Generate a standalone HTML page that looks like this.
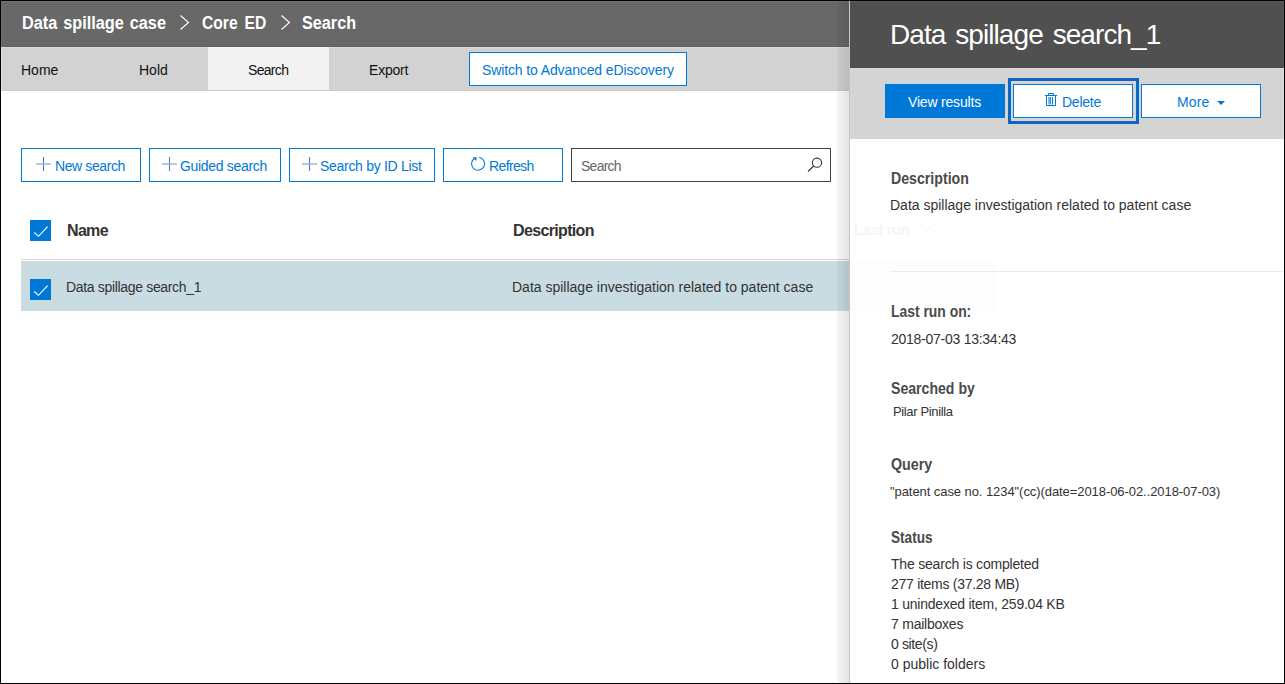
<!DOCTYPE html>
<html><head><meta charset="utf-8">
<style>
*{margin:0;padding:0;box-sizing:border-box}
html,body{width:1285px;height:684px;overflow:hidden;background:#000}
body{position:relative;font-family:"Liberation Sans",sans-serif}
.a{position:absolute;white-space:nowrap;line-height:1}
.r{position:absolute}
svg{position:absolute;overflow:visible}
.btn{position:absolute;border:1px solid #0078d7;background:#fff}
.blue{color:#0078d7}
.chk{position:absolute;width:21px;height:21px;background:#0078d7}
.lbl{font-weight:bold;color:#4a4a4a;font-size:16px;transform-origin:0 0}
.val{color:#333;font-size:14px}
</style></head><body>
<!-- main white area -->
<div class="r" style="left:1px;top:1px;width:1283px;height:682px;background:#fff"></div>
<!-- header -->
<div class="r" style="left:1px;top:1px;width:848px;height:46px;background:#686868"></div>
<div class="r" style="left:1px;top:47px;width:848px;height:44px;background:#d2d2d2"></div>
<div class="r" style="left:208px;top:47px;width:121px;height:44px;background:#f2f2f2"></div>

<div class="r" style="left:1px;top:46px;width:848px;height:1px;background:#616161"></div>
<div class="r" style="left:1px;top:47px;width:848px;height:1px;background:#dcdcdc"></div>
<div class="r" style="left:1px;top:90px;width:848px;height:1px;background:#cbcbcb"></div>
<div class="r" style="left:208px;top:47px;width:121px;height:1px;background:#f6f6f6"></div>
<div class="r" style="left:1px;top:1px;width:848px;height:1px;background:#717171"></div>
<div class="r" style="left:1px;top:1px;width:1px;height:46px;background:#717171"></div>
<div class="r" style="left:1px;top:47px;width:1px;height:44px;background:#dcdcdc"></div>

<div class="a" style="left:22px;top:14px;font-size:18px;font-weight:bold;color:#fff;word-spacing:1.5px;transform:scaleX(0.905);transform-origin:0 0">Data spillage case</div>
<svg style="left:180px;top:15px" width="10" height="16"><polyline points="0.5,0.5 8.5,7.5 0.5,14.5" fill="none" stroke="#fff" stroke-width="1.1"/></svg>
<div class="a" style="left:202px;top:14px;font-size:18px;font-weight:bold;color:#fff;word-spacing:3px;transform:scaleX(0.869);transform-origin:0 0">Core ED</div>
<svg style="left:281px;top:15px" width="10" height="16"><polyline points="0.5,0.5 8.5,7.5 0.5,14.5" fill="none" stroke="#fff" stroke-width="1.1"/></svg>
<div class="a" style="left:302px;top:14px;font-size:18px;font-weight:bold;color:#fff;transform:scaleX(0.9);transform-origin:0 0">Search</div>

<div class="a" style="left:21px;top:63px;font-size:14px;color:#111">Home</div>
<div class="a" style="left:139px;top:63px;font-size:14px;color:#111">Hold</div>
<div class="a" style="left:248px;top:63px;font-size:14px;color:#111;letter-spacing:-0.68px">Search</div>
<div class="a" style="left:369px;top:63px;font-size:14px;color:#111;letter-spacing:-0.2px">Export</div>
<div class="btn" style="left:469px;top:52px;width:218px;height:34px"></div>
<div class="a blue" style="left:482px;top:63px;font-size:14px;letter-spacing:-0.12px">Switch to Advanced eDiscovery</div>

<!-- toolbar -->
<div class="btn" style="left:21px;top:148px;width:120px;height:34px"></div>
<div class="btn" style="left:149px;top:148px;width:132px;height:34px"></div>
<div class="btn" style="left:289px;top:148px;width:146px;height:34px"></div>
<div class="btn" style="left:443px;top:148px;width:120px;height:34px"></div>
<svg style="left:36px;top:157px" width="15" height="14"><path d="M7.5 0V14" stroke="#2a7fdc" stroke-width="1"/><path d="M0 7H15" stroke="#9aa3da" stroke-width="1.3"/></svg>
<svg style="left:162px;top:157px" width="15" height="14"><path d="M7.5 0V14" stroke="#2a7fdc" stroke-width="1"/><path d="M0 7H15" stroke="#9aa3da" stroke-width="1.3"/></svg>
<svg style="left:302px;top:157px" width="15" height="14"><path d="M7.5 0V14" stroke="#2a7fdc" stroke-width="1"/><path d="M0 7H15" stroke="#9aa3da" stroke-width="1.3"/></svg>
<svg style="left:470px;top:156px" width="16" height="16"><path d="M9.2 1.3A6.5 6.5 0 1 1 4.6 2.2" fill="none" stroke="#0078d7" stroke-width="1.1"/><path d="M2.5 1.2L6.6 1.2L6.2 5z" fill="#0078d7"/></svg>
<div class="a blue" style="left:55px;top:159px;font-size:14px;letter-spacing:-0.4px">New search</div>
<div class="a blue" style="left:180px;top:159px;font-size:14px;letter-spacing:-0.32px">Guided search</div>
<div class="a blue" style="left:320px;top:159px;font-size:14px;letter-spacing:-0.29px">Search by ID List</div>
<div class="a blue" style="left:489px;top:159px;font-size:14px;letter-spacing:-0.63px">Refresh</div>
<div class="r" style="left:571px;top:148px;width:260px;height:34px;border:1px solid #444;background:#fff"></div>
<div class="a" style="left:581px;top:159px;font-size:14px;color:#666;letter-spacing:-0.74px">Search</div>
<svg style="left:806px;top:157px" width="18" height="16"><circle cx="11" cy="5.7" r="4.6" fill="none" stroke="#333" stroke-width="1.1"/><path d="M7.7 9L2 14.5" stroke="#333" stroke-width="1.1"/></svg>

<!-- table -->
<div class="chk" style="left:30px;top:220px"></div>
<svg style="left:30px;top:220px" width="21" height="21"><polyline points="4.3,12.5 8.5,16.3 17.6,6.6" fill="none" stroke="#fff" stroke-width="1.1"/></svg>
<div class="a" style="left:67px;top:223px;font-size:16px;font-weight:bold;color:#333;letter-spacing:-0.67px">Name</div>
<div class="a" style="left:513px;top:223px;font-size:16px;font-weight:bold;color:#333;letter-spacing:-0.65px">Description</div>
<div class="r" style="left:21px;top:259px;width:828px;height:1px;background:#d4d4d4"></div>
<div class="r" style="left:21px;top:261px;width:828px;height:50px;background:#c8dce1"></div>
<div class="chk" style="left:30px;top:279px"></div>
<svg style="left:30px;top:279px" width="21" height="21"><polyline points="4.3,12.5 8.5,16.3 17.6,6.6" fill="none" stroke="#fff" stroke-width="1.1"/></svg>
<div class="a" style="left:66px;top:280px;font-size:14px;color:#333;letter-spacing:-0.33px">Data spillage search_1</div>
<div class="a" style="left:512px;top:280px;font-size:14px;color:#333">Data spillage investigation related to patent case</div>

<!-- shadow + panel -->
<div class="r" style="left:837px;top:1px;width:12px;height:682px;background:linear-gradient(to right,rgba(0,0,0,0.035),rgba(0,0,0,0.11))"></div>
<div class="r" style="left:849px;top:1px;width:1px;height:682px;background:#c6c6c6"></div>
<div class="r" style="left:850px;top:1px;width:434px;height:682px;background:#fff"></div>
<div class="r" style="left:850px;top:1px;width:434px;height:67px;background:#505050"></div>
<div class="r" style="left:850px;top:68px;width:434px;height:71px;background:#d4d4d4"></div>
<div class="r" style="left:850px;top:67px;width:434px;height:1px;background:#4a4a4a"></div>
<div class="r" style="left:850px;top:68px;width:434px;height:1px;background:#dadada"></div>
<div class="r" style="left:850px;top:1px;width:434px;height:1px;background:#5a5a5a"></div>
<div class="r" style="left:1283px;top:1px;width:1px;height:67px;background:#5a5a5a"></div>
<div class="r" style="left:1283px;top:68px;width:1px;height:71px;background:#dedede"></div>

<div class="a" style="left:890px;top:21px;font-size:28px;color:#fff;letter-spacing:-0.93px;word-spacing:3px">Data spillage search_1</div>
<div class="r" style="left:885px;top:84px;width:120px;height:34px;background:#0078d7"></div>
<div class="a" style="left:908px;top:95px;font-size:14px;color:#fff;letter-spacing:-0.19px">View results</div>
<div class="r" style="left:1008px;top:78px;width:131px;height:46px;border:3px solid #0a68c2;background:#d9d4cf"></div>
<div class="btn" style="left:1013px;top:84px;width:120px;height:34px"></div>
<svg style="left:1044px;top:92px" width="14" height="16"><path d="M1 3.5H13M4.5 3.5V1.5H9.5V3.5M2.5 3.5V13.5H11.5V3.5M5 5V12.5M6.3 5V12.5M8.5 5V12.5" fill="none" stroke="#0078d7" stroke-width="1"/></svg>
<div class="a blue" style="left:1062px;top:95px;font-size:14px;letter-spacing:-0.26px">Delete</div>
<div class="btn" style="left:1141px;top:84px;width:120px;height:34px"></div>
<div class="a blue" style="left:1177px;top:95px;font-size:14px;letter-spacing:0.13px">More</div>
<svg style="left:1217px;top:101px" width="8" height="4"><path d="M0 0H8L4 4z" fill="#0078d7"/></svg>

<div class="r" style="left:850px;top:261px;width:145px;height:50px;background:#fdfdfd"></div>
<div class="a" style="left:854px;top:222px;font-size:15px;font-weight:bold;color:#f5f5f5;letter-spacing:-0.5px">Last run</div>
<svg style="left:919px;top:222px" width="17" height="9"><polyline points="0.5,0.5 8.5,8 16.5,0.5" fill="none" stroke="#f5f5f5" stroke-width="1"/></svg>
<div class="a lbl" style="left:891px;top:171px;transform:scaleX(0.885)">Description</div>
<div class="a val" style="left:890px;top:198px">Data spillage investigation related to patent case</div>
<div class="r" style="left:890px;top:271px;width:394px;height:1px;background:#ebebeb"></div>
<div class="a lbl" style="left:891px;top:304px;transform:scaleX(0.868)">Last run on:</div>
<div class="a val" style="left:891px;top:332px;letter-spacing:-0.26px">2018-07-03 13:34:43</div>
<div class="a lbl" style="left:891px;top:381px;transform:scaleX(0.881)">Searched by</div>
<div class="a val" style="left:893px;top:405px;font-size:13px;letter-spacing:-0.36px">Pilar Pinilla</div>
<div class="a lbl" style="left:891px;top:457px;transform:scaleX(0.893)">Query</div>
<div class="a val" style="left:890px;top:485px;font-size:13px;letter-spacing:-0.07px">"patent case no. 1234"(cc)(date=2018-06-02..2018-07-03)</div>
<div class="a lbl" style="left:891px;top:530px;transform:scaleX(0.851)">Status</div>
<div class="a val" style="left:891px;top:557px;letter-spacing:-0.2px">The search is completed</div>
<div class="a val" style="left:891px;top:577px;letter-spacing:-0.28px">277 items (37.28 MB)</div>
<div class="a val" style="left:891px;top:597px;letter-spacing:-0.23px">1 unindexed item, 259.04 KB</div>
<div class="a val" style="left:891px;top:617px;letter-spacing:-0.23px">7 mailboxes</div>
<div class="a val" style="left:891px;top:637px;letter-spacing:-0.37px">0 site(s)</div>
<div class="a val" style="left:891px;top:657px">0 public folders</div>
</body></html>
